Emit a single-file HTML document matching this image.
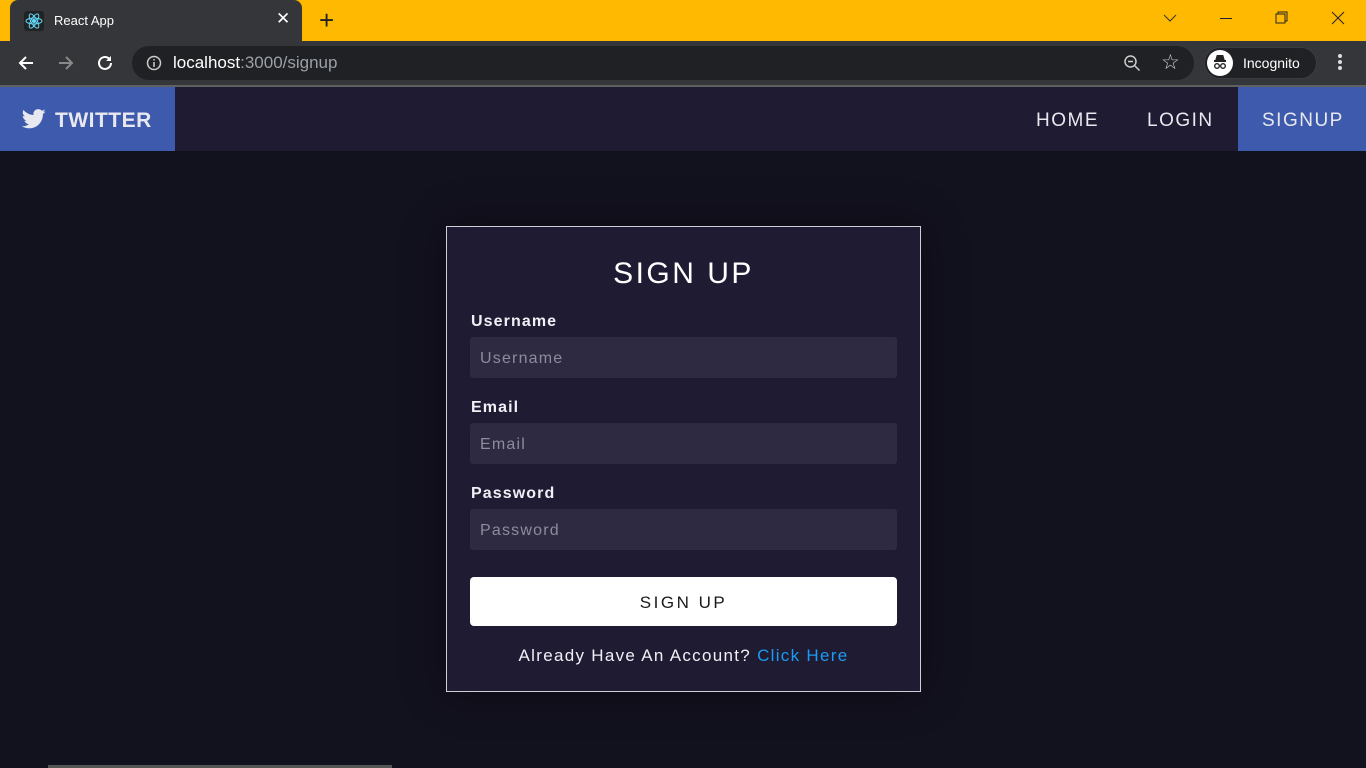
<!DOCTYPE html>
<html><head><meta charset="utf-8"><style>
*{margin:0;padding:0;box-sizing:border-box}
body{width:1366px;height:768px;overflow:hidden;background:#12111e;font-family:"Liberation Sans",sans-serif;position:relative}
.abs{position:absolute}
.tabs{left:0;top:0;width:1366px;height:41px;background:#ffb900}
.tab{left:10px;top:0;width:292px;height:41px;background:#35363a;border-radius:8px 8px 0 0}
.toolbar{left:0;top:41px;width:1366px;height:44px;background:#35363a}
.omni{left:132px;top:46px;width:1062px;height:34px;border-radius:17px;background:#202124}
.sep{left:0;top:85px;width:1366px;height:2px;background:#5f6062}
.nav{left:0;top:87px;width:1366px;height:64px;background:#1e1b33}
.brand{left:0;top:87px;width:175px;height:64px;background:#3d5aad}
.navt{color:#e8e8ee;font-size:19px;letter-spacing:1.5px;top:110px}
.card{left:446px;top:226px;width:475px;height:466px;background:#1e1b33;border:1px solid #cfcfd8;box-shadow:0 0 40px rgba(0,0,0,.4)}
.lbl{color:#f0f0f5;font-size:16px;font-weight:bold;letter-spacing:1.1px;left:471px}
.inp{left:470px;width:427px;height:41px;background:#2d2a42;border-radius:3px;color:#8d8b9c;font-size:16px;letter-spacing:1.2px;padding:13px 0 0 10px}
</style></head><body>
<div class="abs tabs"></div>
<div class="abs tab"></div>
<div class="abs" style="left:24px;top:11px;width:20px;height:20px;background:#222;border-radius:3px"></div>
<svg class="abs" style="left:24px;top:11px" width="20" height="20" viewBox="0 0 20 20" fill="none" stroke="#61dafb" stroke-width="1"><ellipse cx="10" cy="10" rx="8" ry="3"/><ellipse cx="10" cy="10" rx="8" ry="3" transform="rotate(60 10 10)"/><ellipse cx="10" cy="10" rx="8" ry="3" transform="rotate(120 10 10)"/><circle cx="10" cy="10" r="1.5" fill="#61dafb"/></svg>
<div class="abs" style="left:54px;top:13px;color:#fff;font-size:13px">React App</div>
<div class="abs" style="left:276px;top:9px;color:#fff;font-size:17px">✕</div>
<div class="abs" style="left:319px;top:5px;color:#222;font-size:26px">+</div>
<svg class="abs" style="left:1163px;top:13px" width="14" height="10"><path d="M1 2l6 6 6-6" stroke="#333" fill="none"/></svg>
<div class="abs" style="left:1220px;top:18px;width:12px;height:1px;background:#222"></div>
<svg class="abs" style="left:1275px;top:11px" width="14" height="14"><rect x="1" y="3" width="9" height="9" stroke="#222" fill="none"/><path d="M3 3V1h9v9h-2" stroke="#222" fill="none"/></svg>
<svg class="abs" style="left:1331px;top:11px" width="14" height="14"><path d="M1 1l12 12M13 1L1 13" stroke="#222"/></svg>
<div class="abs toolbar"></div>
<svg class="abs" style="left:17px;top:54px" width="18" height="18"><path d="M16 9H3M9 3L3 9l6 6" stroke="#fff" stroke-width="2" fill="none"/></svg>
<svg class="abs" style="left:57px;top:54px" width="18" height="18"><path d="M2 9h13M9 3l6 6-6 6" stroke="#888" stroke-width="2" fill="none"/></svg>
<svg class="abs" style="left:96px;top:54px" width="18" height="18"><path d="M15 9a6 6 0 1 1-2-4.5" stroke="#fff" stroke-width="2" fill="none"/><path d="M15 2v5h-5z" fill="#fff"/></svg>
<div class="abs omni"></div>
<svg class="abs" style="left:146px;top:55px" width="16" height="16"><circle cx="8" cy="8" r="6.5" stroke="#ccc" stroke-width="1.5" fill="none"/><path d="M8 7v5M8 4v1.5" stroke="#ccc" stroke-width="1.5"/></svg>
<div class="abs" style="left:173px;top:53px;font-size:17px;color:#fff">localhost<span style="color:#9aa0a6">:3000/signup</span></div>
<svg class="abs" style="left:1123px;top:54px" width="18" height="18"><circle cx="7.5" cy="7.5" r="5.5" stroke="#ccc" stroke-width="1.5" fill="none"/><path d="M5 7.5h5M11.5 11.5l5 5" stroke="#ccc" stroke-width="1.5"/></svg>
<div class="abs" style="left:1161px;top:50px;font-size:21px;color:#ccc">☆</div>
<div class="abs" style="left:1204px;top:47px;width:113px;height:32px;border-radius:16px;background:#202124;border:1px solid #3c3d40"></div>
<div class="abs" style="left:1207px;top:50px;width:26px;height:26px;border-radius:13px;background:#fff"></div>
<svg class="abs" style="left:1207px;top:50px" width="26" height="26"><path d="M7 11h12M9 11l1.5-5h5l1.5 5" stroke="#222" stroke-width="2" fill="#222"/><circle cx="10" cy="16" r="2.3" stroke="#222" stroke-width="1.4" fill="none"/><circle cx="16" cy="16" r="2.3" stroke="#222" stroke-width="1.4" fill="none"/></svg>
<div class="abs" style="left:1243px;top:55px;color:#fff;font-size:14px">Incognito</div>
<div class="abs" style="left:1338px;top:54px;width:4px;height:4px;border-radius:2px;background:#ddd;box-shadow:0 6px 0 #ddd,0 12px 0 #ddd"></div>
<div class="abs sep"></div>
<div class="abs nav"></div>
<div class="abs brand"></div>
<svg class="abs" style="left:22px;top:109px" width="24" height="20" viewBox="0 0 24 20"><path fill="#e8e8f0" d="M23.6 2.4c-.9.4-1.8.6-2.8.8 1-.6 1.8-1.5 2.1-2.7-.9.6-2 1-3.1 1.2C18.9.7 17.6.1 16.2.1c-2.7 0-4.8 2.2-4.8 4.8 0 .4 0 .8.1 1.1C7.5 5.8 3.9 3.9 1.5 1c-.4.7-.7 1.5-.7 2.4 0 1.7.9 3.2 2.2 4-.8 0-1.5-.2-2.2-.6v.1c0 2.3 1.7 4.3 3.9 4.7-.4.1-.8.2-1.3.2-.3 0-.6 0-.9-.1.6 1.9 2.4 3.3 4.5 3.4-1.7 1.300-3.8 2.1-6 2.1-.4 0-.8 0-1.2-.1 2.2 1.4 4.7 2.2 7.4 2.2 8.9 0 13.7-7.4 13.7-13.7v-.6c1-.7 1.8-1.5 2.5-2.5z"/></svg>
<div class="abs" style="left:55px;top:109px;color:#e8e8f0;font-size:21px;font-weight:bold;letter-spacing:.5px">TWITTER</div>
<div class="abs navt" style="left:1036px">HOME</div>
<div class="abs navt" style="left:1147px">LOGIN</div>
<div class="abs" style="left:1238px;top:87px;width:128px;height:64px;background:#3d5aad"></div>
<div class="abs navt" style="left:1262px">SIGNUP</div>
<div class="abs card"></div>
<div class="abs" style="left:446px;top:257px;width:475px;text-align:center;color:#fff;font-size:30px;letter-spacing:2.5px">SIGN UP</div>
<div class="abs lbl" style="top:313px">Username</div>
<div class="abs inp" style="top:337px">Username</div>
<div class="abs lbl" style="top:399px">Email</div>
<div class="abs inp" style="top:423px">Email</div>
<div class="abs lbl" style="top:485px">Password</div>
<div class="abs inp" style="top:509px">Password</div>
<div class="abs" style="left:470px;top:577px;width:427px;height:49px;background:#fff;border-radius:4px;text-align:center;padding-top:16px;font-size:17px;letter-spacing:2.5px;color:#1a1a1a">SIGN UP</div>
<div class="abs" style="left:446px;top:646px;width:475px;text-align:center;color:#f0f0f5;font-size:17px;letter-spacing:1.3px">Already Have An Account? <span style="color:#1d9bf0">Click Here</span></div>
<div class="abs" style="left:48px;top:765px;width:344px;height:3px;background:#555"></div>
</body></html>
